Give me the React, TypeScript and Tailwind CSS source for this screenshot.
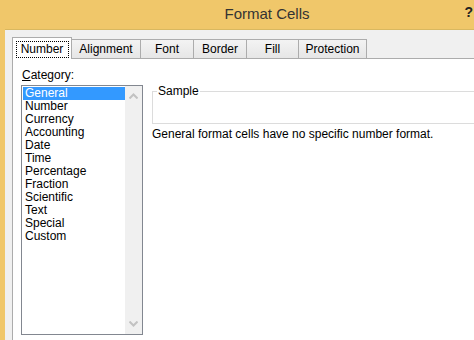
const categories = [
  'General',
  'Number',
  'Currency',
  'Accounting',
  'Date',
  'Time',
  'Percentage',
  'Fraction',
  'Scientific',
  'Text',
  'Special',
  'Custom',
];

const tabs = ['Alignment', 'Font', 'Border', 'Fill', 'Protection'];
const tabWidths = ['w-[70px]', 'w-[54px]', 'w-[54px]', 'w-[53px]', 'w-[69px]'];

const Chevron = ({ up }: { up?: boolean }) => (
  <svg width="9" height="6" viewBox="0 0 9 6" className="block">
    <path
      d={up ? 'M0.5 5.5 L4.5 1.5 L8.5 5.5' : 'M0.5 0.5 L4.5 4.5 L8.5 0.5'}
      fill="none"
      stroke="#c2c2c2"
      strokeWidth="2"
    />
  </svg>
);

const App = () => {
  return (
    <div
      className="w-[474px] h-[340px] bg-[#f0c76a] flex flex-col overflow-hidden text-[12px] text-black"
      style={{ fontFamily: '"Liberation Sans", Arial, sans-serif' }}
    >
      {/* title bar */}
      <div className="h-[29px] relative flex items-center justify-center shrink-0">
        <span className="text-[15px] text-[#333] pl-[60px]">Format Cells</span>
        <span className="absolute right-[1px] top-[2px] text-[14px] font-bold text-[#222]">?</span>
      </div>

      <div className="flex-1 ml-[5px] bg-[#f0f0f0] border-t border-[#d9b860] flex flex-col pl-[7px] pt-[7px]">
        {/* tab strip */}
        <div className="flex items-end h-[22px] relative z-10 -mb-px">
          <div className="w-[60px] h-[22px] bg-white border border-b-0 border-[#acacac] flex items-start justify-center pt-[3px]">
            <span className="border border-dotted border-black px-[2px] leading-[15px] w-[53px] text-center">Number</span>
          </div>
          {tabs.map((t, i) => (
            <div
              key={t}
              className={`${tabWidths[i]} h-[20px] -ml-px first:ml-0 bg-gradient-to-b from-[#f3f3f3] to-[#e6e6e6] border border-[#acacac] flex items-center justify-center`}
            >
              {t}
            </div>
          ))}
        </div>

        {/* panel */}
        <div className="flex-1 bg-white border-l border-t border-[#acacac] flex flex-col pl-[8px] pt-[10px]">
          <div className="leading-[13px] pl-[1px]">
            <span className="underline">C</span>ategory:
          </div>
          <div className="flex mt-[3px] gap-[9px]">
            <div className="w-[122px] h-[250px] border border-[#828790] flex">
              <div className="flex-1 pt-px pl-px">
                {categories.map((c, i) => (
                  <div
                    key={c}
                    className={`h-[13px] leading-[13px] px-[2px] ${i === 0 ? 'bg-[#3399ff] text-white' : ''}`}
                  >
                    {c}
                  </div>
                ))}
              </div>
              <div className="w-[17px] bg-[#f0f0f0] flex flex-col items-center justify-between py-[7px]">
                <Chevron up />
                <Chevron />
              </div>
            </div>

            <div className="flex-1 flex flex-col">
              <fieldset className="h-[39px] border border-[#dcdcdc] pl-[4px] mr-[-40px]">
                <legend className="leading-[13px] px-px">Sample</legend>
              </fieldset>
              <div className="leading-[13px] mt-[4px]">General format cells have no specific number format.</div>
            </div>
          </div>
        </div>
      </div>
    </div>
  );
};

export default App;
